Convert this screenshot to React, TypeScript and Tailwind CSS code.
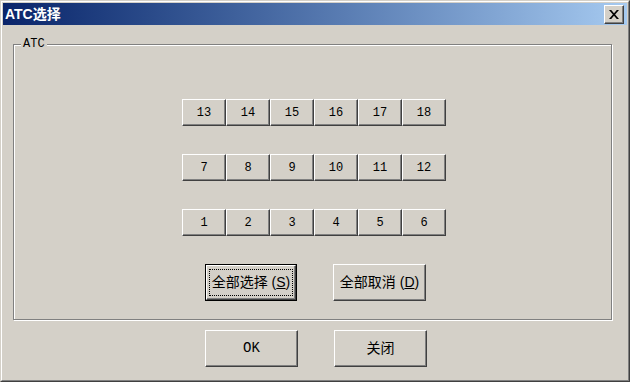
// ATC selection dialog (Windows classic look).
const uiFont = {
  fontFamily: '"Liberation Mono", "Noto Sans CJK SC", monospace',
};
const cjkFont = {
  fontFamily: '"Liberation Sans", "Noto Sans CJK SC", sans-serif',
};

const rows = [
  [13, 14, 15, 16, 17, 18],
  [7, 8, 9, 10, 11, 12],
  [1, 2, 3, 4, 5, 6],
];

function NumButton({ n }: { n: number }) {
  return (
    <button className="flex h-[27px] w-[44px] items-center justify-center border border-t-white border-l-white border-b-[#404040] border-r-[#404040] bg-[#d4d0c8] text-[12px] text-black shadow-[inset_-1px_-1px_0_#808080]">
      {n}
    </button>
  );
}

function PushButton({
  children,
  isDefault = false,
  className = "",
}: {
  children: React.ReactNode;
  isDefault?: boolean;
  className?: string;
}) {
  if (isDefault) {
    return (
      <button className={"h-[37px] w-[92px] border border-black bg-[#d4d0c8] p-0 " + className}>
        <div className="flex h-full w-full items-center justify-center border border-t-white border-l-white border-b-[#404040] border-r-[#404040] shadow-[inset_-1px_-1px_0_#808080]">
          <div className="flex h-[27px] w-[84px] items-center justify-center whitespace-nowrap border border-dotted border-black text-[14px] text-black">
            {children}
          </div>
        </div>
      </button>
    );
  }
  return (
    <button
      className={
        "flex h-[37px] w-[93px] items-center justify-center whitespace-nowrap border border-t-white border-l-white border-b-[#404040] border-r-[#404040] bg-[#d4d0c8] text-[14px] text-black shadow-[inset_-1px_-1px_0_#808080] " +
        className
      }
    >
      {children}
    </button>
  );
}

export default function App() {
  return (
    <div className="h-[382px] w-[630px] border border-t-[#d4d0c8] border-l-[#d4d0c8] border-b-[#404040] border-r-[#404040] bg-[#d4d0c8]" style={uiFont}>
      <div className="flex h-full w-full flex-col border border-t-white border-l-white border-b-[#808080] border-r-[#808080] p-px">
        {/* Title bar */}
        <div className="flex h-[22px] shrink-0 items-center justify-between bg-gradient-to-r from-[#0a246a] to-[#a6caf0] pl-[2px] pr-[3px]">
          <span className="text-[14px] font-bold text-white" style={cjkFont}>
            ATC选择
          </span>
          <button className="flex h-[19px] w-[20px] items-center justify-center border border-t-white border-l-white border-b-[#404040] border-r-[#404040] bg-[#d4d0c8] shadow-[inset_-1px_-1px_0_#808080]">
            <svg width="10" height="9" viewBox="0 0 10 9">
              <path d="M0 0h2.2l2.8 3.3L7.8 0H10L6.1 4.5 10 9H7.8L5 5.7 2.2 9H0l3.9-4.5z" fill="#000" />
            </svg>
          </button>
        </div>

        {/* Group box */}
        <div className="relative ml-[10px] mt-[19px] h-[276px] w-[599px] border border-[#808080] shadow-[inset_1px_1px_0_#fff,1px_1px_0_#fff]">
          <span className="absolute left-[7px] top-[-8px] bg-[#d4d0c8] px-[2px] text-[12px] leading-[14px] text-black">
            ATC
          </span>
          <div className="flex flex-col gap-[28px] pl-[168px] pt-[54px]">
            {rows.map((r, i) => (
              <div key={i} className="flex">
                {r.map((n) => (
                  <NumButton key={n} n={n} />
                ))}
              </div>
            ))}
          </div>
          <div className="mt-[28px] flex gap-[36px] pl-[191px]" style={cjkFont}>
            <PushButton isDefault>
              全部选择 (<span className="underline">S</span>)
            </PushButton>
            <PushButton>
              全部取消 (<span className="underline">D</span>)
            </PushButton>
          </div>
        </div>

        {/* Dialog buttons */}
        <div className="mt-[10px] flex gap-[36px] pl-[202px]">
          <PushButton className="w-[92px] text-[12px]">OK</PushButton>
          <PushButton>
            <span style={cjkFont}>关闭</span>
          </PushButton>
        </div>
      </div>
    </div>
  );
}
